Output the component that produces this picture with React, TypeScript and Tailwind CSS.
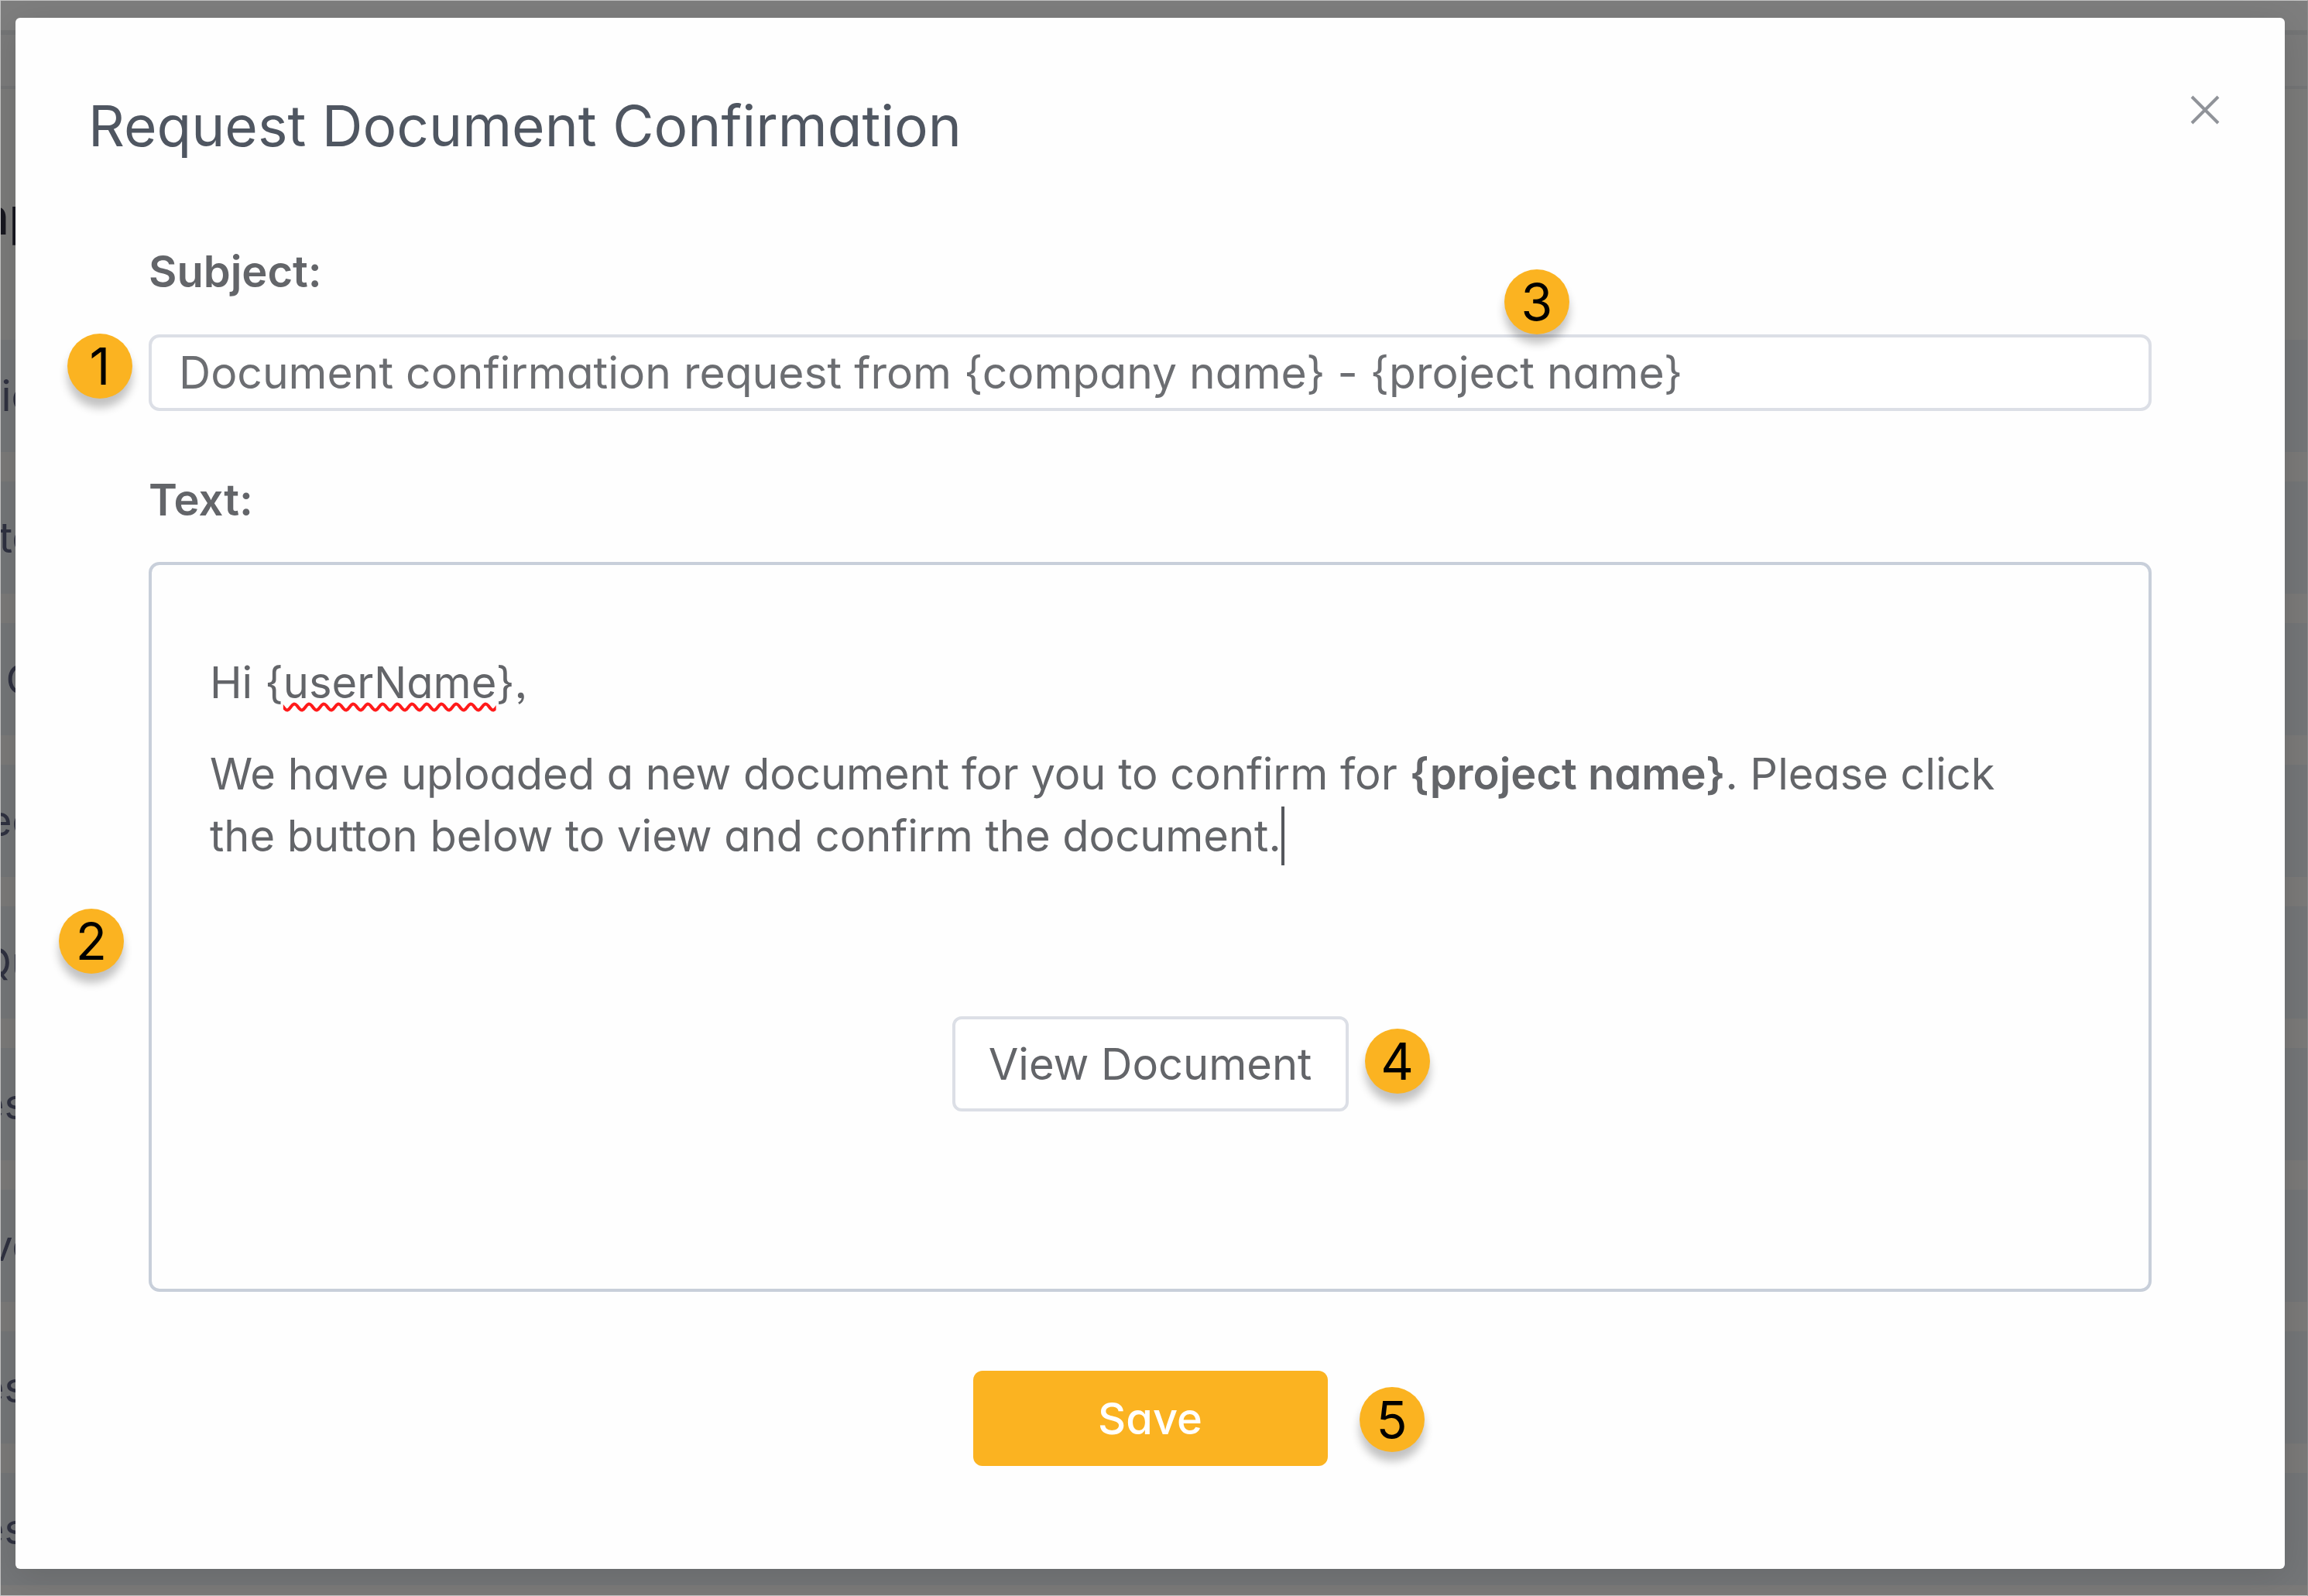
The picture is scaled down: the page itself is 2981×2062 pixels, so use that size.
import { useState } from "react";
import clsx from "clsx";

const rows = ["tio", "te", "C", "ee", "Qu", "esi", "ve", "esi", "esi"];

function Marker({ n, className }: { n: number; className: string }) {
  return (
    <span
      className={clsx(
        "absolute z-10 flex size-[84px] items-center justify-center rounded-full bg-[#fbb321] text-[66px] leading-none font-normal text-black shadow-[0_12px_12px_rgba(0,0,0,0.24)]",
        className
      )}
    >
      {n}
    </span>
  );
}

// dimmed table page that shows around the dialog
function Backdrop() {
  return (
    <div
      aria-hidden="true"
      className="absolute inset-0 overflow-hidden border border-[#c4c4c4] border-r-[#8c8c8c] bg-[#7e7e7e]"
    >
      <div className="h-[38px]" />
      <div className="h-[76px] border-t-[6px] border-b-4 border-[#747576] bg-[#7b7b7b]" />
      <div className="h-[324px] bg-[#7b7b7a] pt-[124px]">
        <div className="flex w-[52px] justify-end text-[66px] leading-[80px] font-semibold whitespace-nowrap text-[#17171f]">np</div>
      </div>
      {rows.map((text, i) => (
        <div key={i} className="border-b-[38px] border-[#7b7a79] bg-[#747678]">
          <div className="flex h-[145px] w-[46px] items-center justify-end text-[54px] whitespace-nowrap text-[#2f3140]">
            {text}
          </div>
        </div>
      ))}
    </div>
  );
}

export default function App() {
  const [subject, setSubject] = useState(
    "Document confirmation request from {company name} - {project name}"
  );

  return (
    <div className="relative min-h-screen overflow-hidden pt-[23px] pr-[30px] pb-[35px] pl-5 font-['Inter',sans-serif] text-[56px] leading-[80px] text-[#636569] [font-feature-settings:'cv11','ss03']">
      <Backdrop />

      <div
        role="dialog"
        aria-labelledby="dialog-title"
        className="relative rounded-[6px] bg-[#fefefe] pb-[133px] shadow-[0_8px_48px_rgba(0,0,0,0.12)]"
      >
        <header className="flex items-start justify-between pt-[92px] pr-[84px] pl-[94px]">
          <h1 id="dialog-title" className="text-[73px] leading-[96px] font-normal text-[#4f5661]">
            Request Document Confirmation
          </h1>
          <button type="button" aria-label="Close" className="mt-2">
            <svg viewBox="0 0 38 38" className="size-[38px]" fill="none" stroke="#909399" strokeWidth="4">
              <path d="M2 2 36 36M36 2 2 36" />
            </svg>
          </button>
        </header>

        <form className="px-[172px] pt-[100px]" onSubmit={(e) => e.preventDefault()}>
          <label htmlFor="subject" className="block font-semibold">
            Subject:
          </label>
          <div className="relative mt-[41px]">
            <input
              id="subject"
              type="text"
              value={subject}
              onChange={(e) => setSubject(e.target.value)}
              className="block h-[99px] w-full rounded-[14px] border-4 border-[#dcdfe6] bg-white px-[35px] text-[57px] text-[#6c6e72] outline-none"
            />
            <Marker n={1} className="-top-px -left-[105px]" />
            <Marker n={3} className="-top-[84px] left-[1751px]" />
          </div>

          <div id="text-label" className="mt-[75px] font-semibold">
            Text:
          </div>
          <div className="relative mt-10 rounded-[14px] border-4 border-[#c8cfda] px-[75px] pt-[112px] pb-[229px]">
            <div
              role="textbox"
              aria-multiline="true"
              aria-labelledby="text-label"
              contentEditable
              suppressContentEditableWarning
              spellCheck={false}
              className="pr-10 outline-none"
            >
              <p>
                Hi {"{"}
                <span className="underline decoration-[#ff1a1a] decoration-wavy decoration-[4px] underline-offset-[6px] [text-decoration-skip-ink:none]">
                  userName
                </span>
                {"},"}
              </p>
              <p className="mt-[38px]">
                We have uploaded a new document for you to confirm for{" "}
                <strong className="font-semibold">{"{project name}"}</strong>. Please click the button
                below to view and confirm the{" "}
                <span className="relative">
                  document.
                  <span className="absolute -top-1 left-full h-[76px] w-[4px] bg-[#55575c]" />
                </span>
              </p>
            </div>

            <div className="mt-[193px] flex justify-center">
              <div className="relative">
                <button
                  type="button"
                  className="block h-[123px] w-[512px] rounded-[12px] border-4 border-[#dcdfe6] bg-white"
                >
                  View Document
                </button>
                <Marker n={4} className="top-4 left-[533px]" />
              </div>
            </div>
            <Marker n={2} className="top-[444px] -left-[120px]" />
          </div>

          <div className="mt-[102px] flex justify-center">
            <div className="relative">
              <button
                type="submit"
                className="block h-[123px] w-[458px] rounded-[12px] bg-[#fbb321] font-medium text-white"
              >
                Save
              </button>
              <Marker n={5} className="top-[21px] left-[499px]" />
            </div>
          </div>
        </form>
      </div>
    </div>
  );
}
